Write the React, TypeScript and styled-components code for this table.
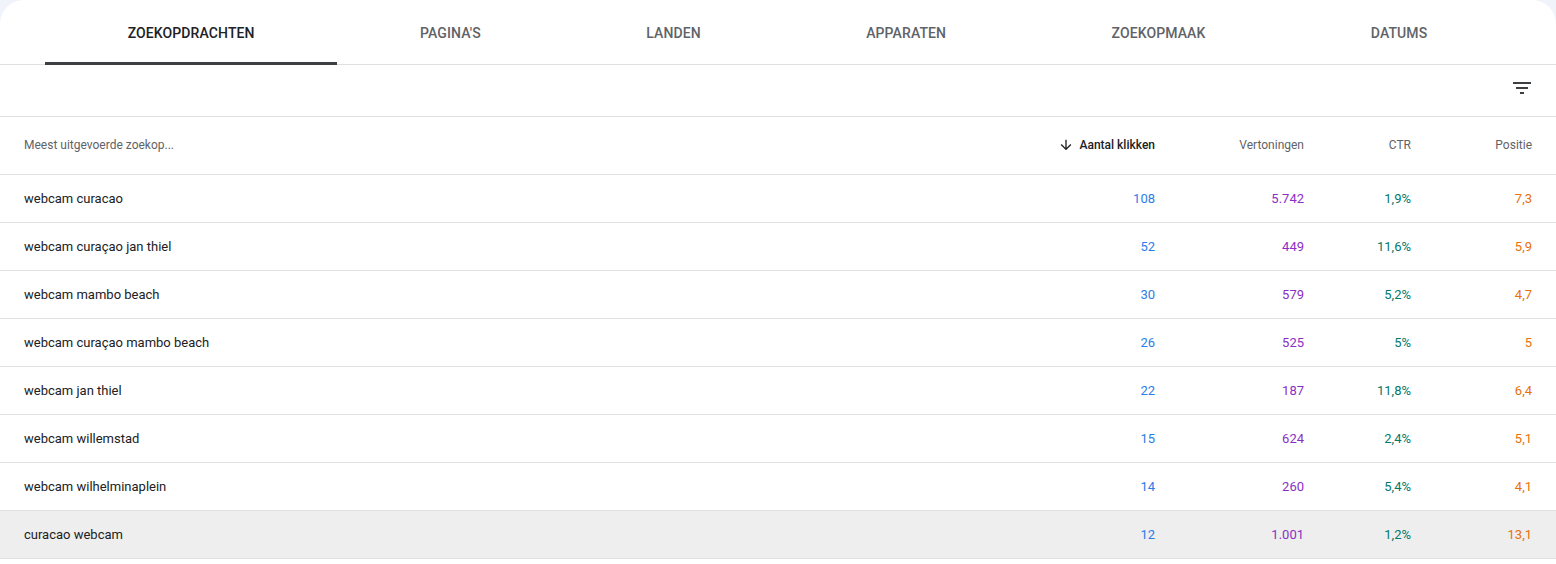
import React, { useState } from 'react';
import styled, { createGlobalStyle } from 'styled-components';

const GlobalStyle = createGlobalStyle`
  html, body {
    margin: 0;
    padding: 0;
    background: #f1f3fb;
    font-family: Roboto, "Liberation Sans", Arial, sans-serif;
  }
`;

interface QueryRow {
  query: string;
  clicks: string;
  impressions: string;
  ctr: string;
  position: string;
}

const tabs = ['Zoekopdrachten', "Pagina's", 'Landen', 'Apparaten', 'Zoekopmaak', 'Datums'];

const rows: QueryRow[] = [
  { query: 'webcam curacao', clicks: '108', impressions: '5.742', ctr: '1,9%', position: '7,3' },
  { query: 'webcam curaçao jan thiel', clicks: '52', impressions: '449', ctr: '11,6%', position: '5,9' },
  { query: 'webcam mambo beach', clicks: '30', impressions: '579', ctr: '5,2%', position: '4,7' },
  { query: 'webcam curaçao mambo beach', clicks: '26', impressions: '525', ctr: '5%', position: '5' },
  { query: 'webcam jan thiel', clicks: '22', impressions: '187', ctr: '11,8%', position: '6,4' },
  { query: 'webcam willemstad', clicks: '15', impressions: '624', ctr: '2,4%', position: '5,1' },
  { query: 'webcam wilhelminaplein', clicks: '14', impressions: '260', ctr: '5,4%', position: '4,1' },
  { query: 'curacao webcam', clicks: '12', impressions: '1.001', ctr: '1,2%', position: '13,1' },
];

const metricColors = {
  clicks: '#2b7de9',
  impressions: '#8a2fc4',
  ctr: '#00796b',
  position: '#e8710a',
};

export default function App() {
  const [active, setActive] = useState(0);
  const [hovered] = useState(rows.length - 1);

  return (
    <>
      <GlobalStyle />
      <Card>
        <TabBar>
          {tabs.map((tab, i) => (
            <Tab key={tab} $active={i === active} onClick={() => setActive(i)}>
              {tab}
            </Tab>
          ))}
        </TabBar>
        <Toolbar>
          <IconButton aria-label="Filter">
            <svg width="24" height="24" viewBox="0 0 24 24" fill="#3c4043">
              <path d="M10 18h4v-2h-4v2zM3 6v2h18V6H3zm3 7h12v-2H6v2z" />
            </svg>
          </IconButton>
        </Toolbar>
        <HeaderRow>
          <HeadCell $align="left">Meest uitgevoerde zoekop...</HeadCell>
          <HeadCell $align="right" $sorted>
            <svg width="16" height="16" viewBox="0 0 24 24" fill="#202124">
              <path d="M20 12l-1.41-1.41L13 16.17V4h-2v12.17l-5.58-5.59L4 12l8 8 8-8z" />
            </svg>
            Aantal klikken
          </HeadCell>
          <HeadCell $align="right">Vertoningen</HeadCell>
          <HeadCell $align="right">CTR</HeadCell>
          <HeadCell $align="right">Positie</HeadCell>
        </HeaderRow>
        {rows.map((row, i) => (
          <DataRow key={row.query} $highlight={i === hovered}>
            <QueryCell>{row.query}</QueryCell>
            <NumCell $color={metricColors.clicks}>{row.clicks}</NumCell>
            <NumCell $color={metricColors.impressions}>{row.impressions}</NumCell>
            <NumCell $color={metricColors.ctr}>{row.ctr}</NumCell>
            <NumCell $color={metricColors.position}>{row.position}</NumCell>
          </DataRow>
        ))}
      </Card>
    </>
  );
}

const Card = styled.div`
  background: #fff;
  border-radius: 24px 24px 0 0;
  min-height: 564px;
`;

const TabBar = styled.div`
  display: flex;
  height: 65px;
  padding: 0 46px 0 45px;
  border-bottom: 1px solid #e0e0e0;
  box-sizing: border-box;
`;

const Tab = styled.button<{ $active: boolean }>`
  flex: 1 1 auto;
  display: flex;
  align-items: center;
  justify-content: center;
  padding: 3px 16px 0;
  background: none;
  border: none;
  border-bottom: 3px solid ${({ $active }) => ($active ? '#3c4043' : 'transparent')};
  margin-bottom: -1px;
  font-family: Roboto, "Liberation Sans", Arial, sans-serif;
  font-size: 14px;
  font-weight: 500;
  text-transform: uppercase;
  letter-spacing: 0.1px;
  color: ${({ $active }) => ($active ? '#202124' : '#5f6368')};
  cursor: pointer;
`;

const Toolbar = styled.div`
  display: flex;
  justify-content: flex-end;
  align-items: center;
  height: 52px;
  padding: 0 22px 6px 0;
  border-bottom: 1px solid #e0e0e0;
  box-sizing: border-box;
`;

const IconButton = styled.button`
  display: flex;
  padding: 0;
  background: none;
  border: none;
  cursor: pointer;
`;

const Grid = styled.div`
  display: grid;
  grid-template-columns: 1fr 160px 149px 107px 121px;
  align-items: center;
  padding: 0 24px;
  border-bottom: 1px solid #e0e0e0;
  box-sizing: border-box;
`;

const HeaderRow = styled(Grid)`
  height: 58px;
  padding-bottom: 2px;
`;

const DataRow = styled(Grid)<{ $highlight: boolean }>`
  height: 48px;
  background: ${({ $highlight }) => ($highlight ? '#eeeeee' : '#fff')};
`;

const HeadCell = styled.div<{ $align: 'left' | 'right'; $sorted?: boolean }>`
  display: flex;
  align-items: center;
  gap: 6px;
  justify-content: ${({ $align }) => ($align === 'left' ? 'flex-start' : 'flex-end')};
  font-size: 12px;
  font-weight: ${({ $sorted }) => ($sorted ? 500 : 400)};
  color: ${({ $sorted }) => ($sorted ? '#202124' : '#5f6368')};
`;

const QueryCell = styled.div`
  font-size: 13px;
  color: #202124;
`;

const NumCell = styled.div<{ $color: string }>`
  text-align: right;
  font-size: 13px;
  color: ${({ $color }) => $color};
`;
